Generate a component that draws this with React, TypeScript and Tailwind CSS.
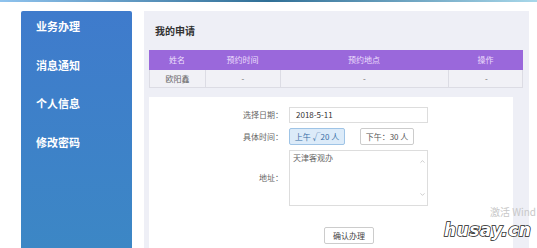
import { ChevronDown, ChevronUp } from "lucide-react";

const menu = ["业务办理", "消息通知", "个人信息", "修改密码"];

const font = { fontFamily: '"Noto Sans CJK SC", "Noto Sans", sans-serif' };

export default function App() {
  return (
    <div
      className="relative h-[248px] w-[537px] overflow-hidden bg-white text-[#555]"
      style={font}
    >
      <div className="h-[2px] w-full bg-gradient-to-r from-[#8fc3ee] via-[#2f6f96] to-[#a8d8ea]" />
      <div className="flex gap-[12px] pl-[21px] pt-[9px]">
        <aside className="flex h-[240px] w-[111px] flex-col gap-[24.5px] rounded-t-[2px] bg-gradient-to-b from-[#3f7bcc] to-[#3c87c5] pl-[15px] pt-[8px]">
          {menu.map((m) => (
            <div key={m} className="text-[11px] font-bold leading-[14px] text-white">
              {m}
            </div>
          ))}
        </aside>

        <main className="flex h-[240px] w-[385px] flex-col bg-[#eeeff6] px-[5px]">
          <div className="flex h-[39px] items-center pl-[6px] text-[10px] font-bold text-[#333]">
            我的申请
          </div>

          <div className="w-[374px] text-[8px]">
            <div className="grid h-[20px] grid-cols-[56px_75px_168px_75px] items-center bg-[#9a68db] text-center text-[#ecdffb]">
              <span>姓名</span>
              <span>预约时间</span>
              <span>预约地点</span>
              <span>操作</span>
            </div>
            <div className="grid h-[18px] grid-cols-[56px_75px_168px_75px] border-x border-b border-[#dcdce4] bg-[#f1f1f6] text-center text-[#666]">
              <span className="flex items-center justify-center border-r border-[#dcdce4]">欧阳鑫</span>
              <span className="flex items-center justify-center border-r border-[#dcdce4]">-</span>
              <span className="flex items-center justify-center border-r border-[#dcdce4]">-</span>
              <span className="flex items-center justify-center">-</span>
            </div>
          </div>

          <div className="mt-[9px] w-[364px] flex-1 bg-white pt-[10px] text-[8px]">
            <div className="grid grid-cols-[134px_139px] gap-x-[6px] gap-y-[5px]">
              <div className="flex items-center justify-end text-[#666]">选择日期：</div>
              <div className="flex h-[16px] items-center border border-[#ddd] pl-[6px] text-[#333]">
                2018-5-11
              </div>

              <div className="flex items-center justify-end text-[#666]">具体时间：</div>
              <div className="flex gap-[15px]">
                <button className="h-[17px] w-[56px] rounded-[2px] border border-[#9fc4e6] bg-[#dcebf9] text-[8px] text-[#3a6ea5]">
                  上午 √20 人
                </button>
                <button className="h-[17px] w-[54px] rounded-[2px] border border-[#ccc] bg-white text-[8px] text-[#555]">
                  下午：30 人
                </button>
              </div>

              <div className="flex items-center justify-end text-[#666]">地址：</div>
              <div className="relative h-[56px] border border-[#ddd] pl-[3px] pt-[1px] text-[#666]">
                天津客观办
                <div className="absolute right-[1px] top-[1px] flex h-[52px] w-[8px] flex-col items-center justify-between py-[6px] text-[#aaa]">
                  <ChevronUp size={7} strokeWidth={2} />
                  <ChevronDown size={7} strokeWidth={2} />
                </div>
              </div>
            </div>

            <button className="ml-[175px] mt-[21px] h-[17px] w-[50px] rounded-[2px] border border-[#ccc] bg-white text-[8px] text-[#444]">
              确认办理
            </button>
          </div>
        </main>
      </div>

      <div className="absolute left-[490px] top-[206px] whitespace-nowrap text-[10px] leading-[12px] text-[#c8c8c8]">
        激活 Wind
      </div>
      <div
        className="absolute left-[444px] top-[222px] text-[17px] font-black italic leading-none tracking-[0.5px] text-white"
        style={{ WebkitTextStroke: "1.5px #222", paintOrder: "stroke fill", fontFamily: '"DejaVu Sans", sans-serif' }}
      >
        husay.cn
      </div>
    </div>
  );
}
